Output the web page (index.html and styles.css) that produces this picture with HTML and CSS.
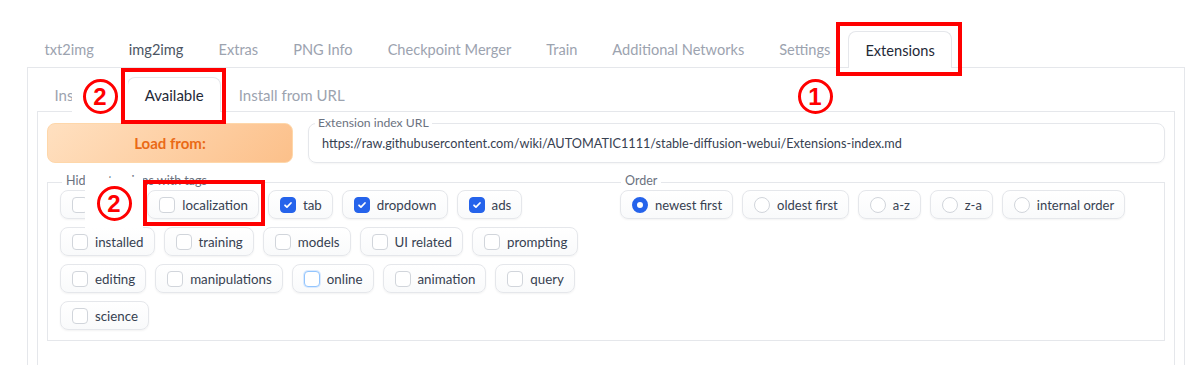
FILE: index.html
```html
<!DOCTYPE html>
<html lang="en">
<head>
<meta charset="utf-8">
<title>Extensions</title>
<link rel="stylesheet" href="styles.css">
</head>
<body>
<div class="app">
  <nav class="tabs top-tabs">
    <div class="tab">txt2img</div>
    <div class="tab dark">img2img</div>
    <div class="tab">Extras</div>
    <div class="tab">PNG Info</div>
    <div class="tab">Checkpoint Merger</div>
    <div class="tab">Train</div>
    <div class="tab">Additional Networks</div>
    <div class="tab">Settings</div>
    <div class="tab sel">Extensions</div>
  </nav>
  <div class="panel outer">
    <nav class="tabs inner-tabs">
      <div class="tab">Installed</div>
      <div class="tab sel">Available</div>
      <div class="tab">Install from URL</div>
    </nav>
    <div class="panel inner">
      <div class="load-row">
        <button class="load">Load from:</button>
        <fieldset class="url-field">
          <legend>Extension index URL</legend>
          <div class="url-input">https://raw.githubusercontent.com/wiki/AUTOMATIC1111/stable-diffusion-webui/Extensions-index.md</div>
        </fieldset>
      </div>
      <div class="filter-row">
        <fieldset class="group tags">
          <legend>Hide extensions with tags</legend>
          <div class="pills">
            <label class="pill"><span class="box"></span>script</label>
            <label class="pill"><span class="box"></span>localization</label>
            <label class="pill"><span class="box on"><svg viewBox="0 0 16 16"><path d="M4.6 8.3l2.2 2.2 4.6-4.8"/></svg></span>tab</label>
            <label class="pill"><span class="box on"><svg viewBox="0 0 16 16"><path d="M4.6 8.3l2.2 2.2 4.6-4.8"/></svg></span>dropdown</label>
            <label class="pill"><span class="box on"><svg viewBox="0 0 16 16"><path d="M4.6 8.3l2.2 2.2 4.6-4.8"/></svg></span>ads</label>
            <label class="pill"><span class="box"></span>installed</label>
            <label class="pill"><span class="box"></span>training</label>
            <label class="pill"><span class="box"></span>models</label>
            <label class="pill"><span class="box"></span>UI related</label>
            <label class="pill"><span class="box"></span>prompting</label>
            <label class="pill"><span class="box"></span>editing</label>
            <label class="pill"><span class="box"></span>manipulations</label>
            <label class="pill"><span class="box focus"></span>online</label>
            <label class="pill"><span class="box"></span>animation</label>
            <label class="pill"><span class="box"></span>query</label>
            <label class="pill"><span class="box"></span>science</label>
          </div>
        </fieldset>
        <fieldset class="group order">
          <legend>Order</legend>
          <div class="pills">
            <label class="pill"><span class="radio on"></span>newest first</label>
            <label class="pill"><span class="radio"></span>oldest first</label>
            <label class="pill"><span class="radio"></span>a-z</label>
            <label class="pill"><span class="radio"></span>z-a</label>
            <label class="pill"><span class="radio"></span>internal order</label>
          </div>
        </fieldset>
      </div>
    </div>
  </div>
</div>

<div class="mask mask-a"><span class="num">2</span></div>
<div class="mask mask-b"><span class="num">2</span></div>
<div class="num-free"><span class="num">1</span></div>
<div class="redbox rb-ext"></div>
<div class="redbox rb-avail"></div>
<div class="redbox rb-loc"></div>
</body>
</html>
```

FILE: styles.css
```css
html, body {
  margin: 0;
  padding: 0;
  background: #ffffff;
}
body {
  position: relative;
  width: 1200px;
  height: 365px;
  overflow: hidden;
  font-family: Lato, "Open Sans", sans-serif;
  color: #374151;
}

.tabs {
  display: flex;
  align-items: flex-end;
  position: relative;
  z-index: 1;
}
.tab {
  box-sizing: border-box;
  display: flex;
  align-items: center;
  padding: 0 16.5px;
  font-size: 14.6px;
  color: #9ca3af;
  border: 1px solid transparent;
  border-bottom: none;
  border-radius: 8px 8px 0 0;
  white-space: nowrap;
}
.tab.dark { color: #4b5563; }
.tab.sel {
  border-color: #e5e7eb;
  background: #ffffff;
  color: #1f2937;
  margin-bottom: -1px;
}

.top-tabs {
  margin: 31px 0 0 27px;
  height: 36px;
}
.top-tabs .tab { height: 36px; }
.top-tabs .tab.sel { height: 37px; }

.panel {
  box-sizing: border-box;
  border: 1px solid #e5e7eb;
  border-bottom: none;
}
.outer {
  margin-left: 27px;
  width: 1158px;
  height: 320px;
  padding: 9px 9px 0 9px;
}
.inner-tabs { height: 34px; }
.inner-tabs .tab { height: 34px; font-size: 15px; }
.inner-tabs .tab.sel { height: 35px; }

.inner {
  height: 300px;
  padding: 4px 9px 0 9px;
}

.load-row {
  display: flex;
  align-items: flex-end;
  gap: 15px;
}
.load {
  width: 246px;
  height: 40px;
  border: 1px solid #fed7aa;
  border-radius: 8px;
  background: linear-gradient(135deg, #ffe0c0 0%, #fcc08a 100%);
  color: #ea6a16;
  font-family: Lato, sans-serif;
  font-weight: 700;
  font-size: 15px;
  padding: 0;
}
.url-field {
  flex: 1;
  margin: 0;
  padding: 0 13px;
  border: 1px solid #e5e7eb;
  border-radius: 8px;
  height: 47px;
  box-sizing: border-box;
  box-shadow: 0 1px 2px rgba(0,0,0,0.04);
}
.url-field legend {
  font-size: 12.2px;
  line-height: 14px;
  color: #6b7280;
  padding: 0 3px;
  margin-left: -7px;
}
.url-input {
  height: 38px;
  margin-top: -6px;
  display: flex;
  align-items: center;
  font-size: 12.7px;
  color: #374151;
  white-space: nowrap;
}

.filter-row {
  display: flex;
  margin-top: 11px;
}
.group {
  margin: 0;
  border: 1px solid #e5e7eb;
  padding: 0 6px 10px 12px;
  box-sizing: border-box;
}
.group legend {
  font-size: 12.5px;
  line-height: 14px;
  color: #6b7280;
  padding: 0 4px 2px 4px;
  margin-left: 2px;
}
.tags {
  width: 560px;
  border-right: none;
}
.order {
  flex: 1;
  border-left: none;
  padding-left: 13px;
  border-right: 1px solid #e5e7eb;
}
.order legend { margin-left: 1px; }

.pills {
  display: flex;
  flex-wrap: wrap;
  gap: 8px 9px;
}
.pill {
  box-sizing: border-box;
  height: 29px;
  display: flex;
  align-items: center;
  gap: 7px;
  padding: 0 10px 0 11px;
  border: 1px solid #e5e7eb;
  border-radius: 8px;
  background: linear-gradient(#ffffff, #f9fafb);
  box-shadow: 0 1px 2px rgba(0,0,0,0.05);
  font-size: 13.3px;
  color: #374151;
  white-space: nowrap;
}
.order .pill { font-size: 13px; }
.box {
  box-sizing: border-box;
  width: 16px;
  height: 16px;
  border: 1px solid #d1d5db;
  border-radius: 4px;
  background: #ffffff;
  display: flex;
}
.box.on {
  background: #2563eb;
  border-color: #2563eb;
}
.box svg { width: 14px; height: 14px; }
.box svg path {
  fill: none;
  stroke: #ffffff;
  stroke-width: 2;
  stroke-linecap: round;
  stroke-linejoin: round;
}
.box.focus {
  border: 1.5px solid #93c5fd;
  box-shadow: 0 0 0 1px #dbeafe;
}
.radio {
  box-sizing: border-box;
  width: 16px;
  height: 16px;
  border: 1px solid #d1d5db;
  border-radius: 50%;
  background: #ffffff;
}
.radio.on {
  border: 5px solid #2563eb;
  background: #ffffff;
}

/* annotations */
.mask, .num-free {
  position: absolute;
  background: #ffffff;
  display: flex;
  align-items: center;
  justify-content: center;
  z-index: 5;
}
.mask-a { left: 72px; top: 72px; width: 56px; height: 48px; }
.mask-b { left: 85px; top: 178px; width: 58px; height: 50px; }
.num-free { left: 795px; top: 76px; width: 40px; height: 40px; background: transparent; }
.num {
  box-sizing: border-box;
  width: 35px;
  height: 35px;
  border: 3px solid #ff0000;
  border-radius: 50%;
  color: #ff0000;
  font-family: "Liberation Sans", Arial, sans-serif;
  font-weight: 700;
  font-size: 24px;
  line-height: 29px;
  text-align: center;
}
.redbox {
  position: absolute;
  box-sizing: border-box;
  border: 4px solid #ff0000;
  z-index: 6;
}
.rb-ext { left: 836px; top: 22px; width: 126px; height: 54px; }
.rb-avail { left: 121px; top: 68px; width: 105px; height: 56px; }
.rb-loc { left: 143px; top: 180px; width: 122px; height: 46px; }
```
